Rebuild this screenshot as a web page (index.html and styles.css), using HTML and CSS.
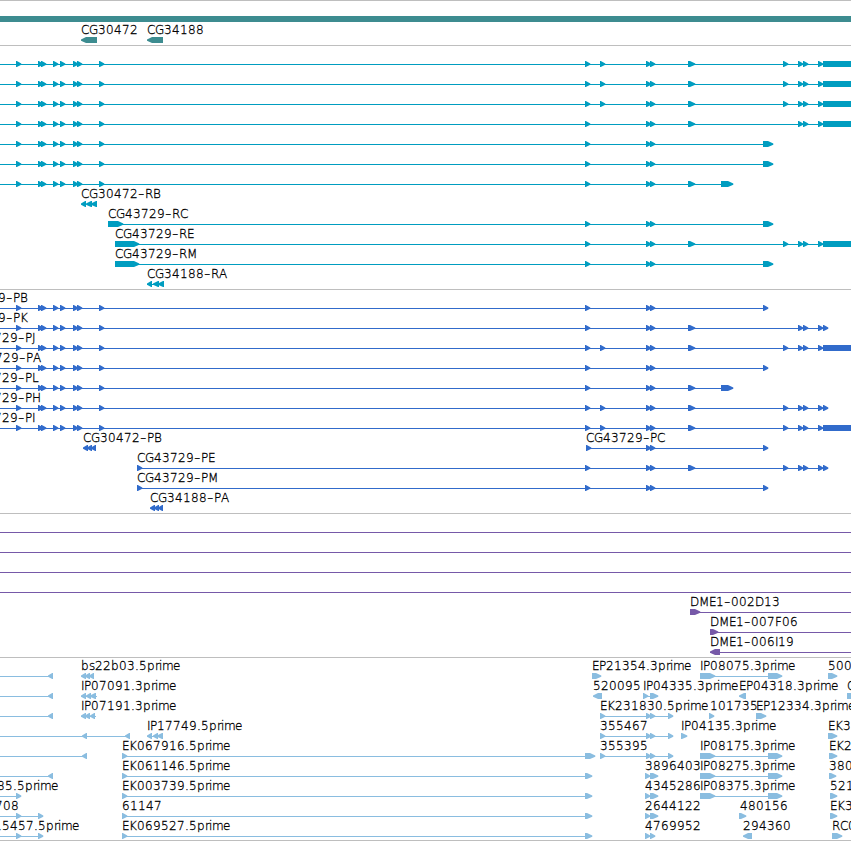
FILE: index.html
```html
<!DOCTYPE html>
<html lang="en"><head><meta charset="utf-8"><title>Genome browser</title><link rel="stylesheet" href="styles.css"></head>
<body><main id="browser" class="browser"></main><script src="tracks.js"></script></body></html>
```

FILE: styles.css
```css
body { margin: 0; background: #fff; }
.browser { width: 851px; height: 841px; overflow: hidden; display: flex; flex-direction: column; }
.track { flex: none; border-top: 1px solid #bebebe; box-sizing: border-box; }
.track.last { border-bottom: 1px solid #bebebe; }
.track svg { display: block; }
.genes { height: 45px; color: #3d8c90; }
.transcripts { height: 244px; color: #009dc0; }
.proteins { height: 224px; color: #316bcb; }
.bacs { height: 144px; color: #7659a8; }
.ests { height: 184px; color: #8abde0; }
.label { font: 200 12px "DejaVu Sans Light", "DejaVu Sans", sans-serif; fill: #000; stroke: #000; stroke-width: 0.3px; font-kerning: none; }
.dash { font-size: 18px; stroke-width: 0.1px; }
.feature { fill: currentColor; }
```

FILE: tracks.js
```js
// Each row: baseline y of the connector, labels, connector spans, and features [start, end].
const adv = {C:8,G:9,E:7,K:8,'.':4,p:8,r:4,i:3,m:11,e:7,b:8,s:6,D:9,M:10,F:7,I:3,L:7,J:4,H:9,A:8,B:8,R:8,P:7,'-':7};

function label(text, x, y) {
  let at = x;
  const xs = [...text].map(c => { const v = at; at += adv[c] || 8; return v; });
  const body = [...text].map((c, i) => c === '-' ? `<tspan class="dash" dy="0.5">-</tspan>` : i && text[i - 1] === '-' ? `<tspan dy="-0.5">${c}</tspan>` : c).join('');
  return `<text class="label" x="${xs.join(' ')}" y="${y}">${body}</text>`;
}
function feature([a, b, dir], y) {
  const t = y - 3, h = y + 3, u = y - 0.5, v = y + 0.7;
  if (dir === '=') return `<path class="feature" d="M${a} ${t}H${b}V${h}H${a}Z"/>`;
  if (dir === '<') {
    const n = Math.max(a + 4.2, Math.min(a + 5, b - 1));
    return `<path class="feature" d="M${b} ${t}H${n}L${a} ${u}V${v}L${n} ${h}H${b}Z"/>`;
  }
  const k = Math.max(a + 0.8, b - 5);
  return `<path class="feature" d="M${a} ${t}H${k}L${b + 0.3} ${u}V${v}L${k} ${h}H${a}Z"/>`;
}
const r = (...xs) => xs.map(x => Array.isArray(x) ? x : [x, x + 5]);
const l = (...xs) => xs.map(x => Array.isArray(x) ? [...x, '<'] : [x, x + 5, '<']);

const W = 851;
const left = r(16, 38, 41, 53, 60, 73, 77, 99);
const mid = r(585, 646, 650);
const wide = r([688, 695]);
const tail = [[823, W, '=']];
const exonsA = [...left, ...mid, ...r(600), ...wide, ...r(783, 798, 803, 818), ...tail];
const short = end => [...left, ...mid, [763, end]];
const trio = [...r(600, 646, 650, 668)];
const pair = [[700, 715], [768, 782]];

const tracks = [
  { cls: 'genes', top: 0, h: 45, rows: [
    { y: 19, f: [[0, W, '=']] },
    { y: 40, labels: [['CG30472', 81], ['CG34188', 147]], f: l([81, 97], [147, 163]) } ] },
  { cls: 'transcripts', top: 45, h: 244, rows: [
    ...[64, 84, 104].map(y => ({ y, lines: [[0, W]], f: exonsA })),
    { y: 124, lines: [[0, W]], f: [...left, ...mid, ...wide, ...r(798, 803, 818), ...tail] },
    ...[144, 164].map(y => ({ y, lines: [[0, 773]], f: short(773) })),
    { y: 184, lines: [[0, 733]], f: [...left, ...mid, ...wide, [721, 733]] },
    { y: 204, labels: [['CG30472-RB', 81]], f: l([81, 86], [86, 92], [91, 97]) },
    { y: 224, labels: [['CG43729-RC', 108]], lines: [[108, 773]], f: [[108, 123], ...mid, [763, 773]] },
    { y: 244, labels: [['CG43729-RE', 115]], lines: [[115, W]], f: [[115, 139], ...mid, ...wide, ...r(783, 798, 803, 818), ...tail] },
    { y: 264, labels: [['CG43729-RM', 115]], lines: [[115, 773]], f: [[115, 139], ...mid, [763, 773]] },
    { y: 284, labels: [['CG34188-RA', 147]], lines: [[147, 164]], f: l(147, [153, 159], [158, 164]) } ] },
  { cls: 'proteins', top: 289, h: 224, rows: [
    { y: 308, labels: [['CG43729-PB', -51]], lines: [[0, 768]], f: short(768) },
    { y: 328, labels: [['CG43729-PK', -51]], lines: [[0, 828]], f: [...left, ...mid, ...wide, ...r(798, 803, 818, 823)] },
    { y: 348, labels: [['CG43729-PJ', -39]], lines: [[0, W]], f: exonsA },
    { y: 368, labels: [['CG43729-PA', -38]], lines: [[0, 768]], f: short(768) },
    { y: 388, labels: [['CG43729-PL', -39]], lines: [[0, 733]], f: [...left, ...mid, ...wide, [721, 733]] },
    { y: 408, labels: [['CG43729-PH', -39]], lines: [[0, 828]], f: [...left, ...mid, ...r(600), ...wide, ...r(783, 798, 803, 818, 823)] },
    { y: 428, labels: [['CG43729-PI', -39]], lines: [[0, W]], f: exonsA },
    { y: 448, labels: [['CG30472-PB', 83], ['CG43729-PC', 586]], lines: [[586, 768]], f: [...l(83, 87, [91, 96]), ...r(586, 646, 650, 763)] },
    { y: 468, labels: [['CG43729-PE', 137]], lines: [[137, 828]], f: [...r(137), ...mid, ...wide, ...r(783, 798, 803, 818, 823)] },
    { y: 488, labels: [['CG43729-PM', 137]], lines: [[137, 768]], f: [...r(137), ...mid, ...r(763)] },
    { y: 508, labels: [['CG34188-PA', 150]], f: l(150, 154, [158, 163]) } ] },
  { cls: 'bacs', top: 513, h: 144, rows: [
    ...[532, 552, 572, 592].map(y => ({ y, lines: [[0, W]], f: [] })),
    { y: 612, labels: [['DME1-002D13', 690]], lines: [[690, W]], f: [[690, 700]] },
    { y: 632, labels: [['DME1-007F06', 710]], lines: [[710, W]], f: [[710, 718]] },
    { y: 652, labels: [['DME1-006I19', 710]], lines: [[710, W]], f: [[710, 720, '<']] } ] },
  { cls: 'ests last', top: 657, h: 184, rows: [
    { y: 676, labels: [['bs22b03.5prime', 81], ['EP21354.3prime', 592], ['IP08075.3prime', 700], ['500', 828]], lines: [[0, 53], [700, 782]], f: [...l(48, 81, 85, 89), [592, 601], ...pair, [828, 837]] },
    { y: 696, labels: [['IP07091.3prime', 81], ['520095', 593], ['IP04335.3prime', 643], ['EP04318.3prime', 739], ['C', 847]], lines: [[0, 53], [81, 97], [643, 658]], f: [...l(48, 81, 86, [90, 96], [593, 602], [739, 746]), [643, 648], [650, 658], [847, W, '=']] },
    { y: 716, labels: [['IP07191.3prime', 81], ['EK231830.5prime', 600], ['101735', 710], ['EP12334.3prime', 756]], lines: [[0, 53], [81, 96], [600, 673]], f: [...l(48, 81, 85, [90, 95]), ...trio, [709, 714], [756, 766]] },
    { y: 736, labels: [['IP17749.5prime', 147], ['355467', 600], ['IP04135.3prime', 681], ['EK3', 828]], lines: [[0, 130], [147, 163], [600, 673]], f: [...l(82, 125, 147, 153, [157, 163]), ...trio, [681, 687], [828, 837]] },
    { y: 756, labels: [['EK067916.5prime', 122], ['355395', 600], ['IP08175.3prime', 700], ['EK2', 829]], lines: [[0, 87], [122, 595], [600, 673], [700, 782]], f: [...l(82), ...r(122), [585, 595], ...trio, ...pair, [829, 837]] },
    ...[[776, 'EK061146.5prime', '3896403', 'IP08275.3prime', '380', 829], [796, 'EK003739.5prime', '4345286', 'IP08375.3prime', '521', 830]].map(([y, a, b, c, d, x]) => ({ y, labels: [[a, 122], [b, 645], [c, 700], [d, x]].concat(y === 796 ? [['85.5prime', -3]] : []), lines: [[0, y === 776 ? 53 : 21], [122, 592], [700, 782]], f: [...(y === 776 ? l(48) : r(16)), ...r(122), [585, 592], [645, 650], [650, 658], ...pair, [x, x + 7]] })),
    { y: 816, labels: [['708', -5], ['61147', 122], ['2644122', 645], ['480156', 740], ['EK3', 830]], lines: [[0, 43], [122, 592]], f: [...r(16, 38, 122), [585, 592], [645, 650], [650, 658], [739, 746], [830, 837]] },
    { y: 836, labels: [['15457.5prime', -6], ['EK069527.5prime', 122], ['4769952', 645], ['294360', 743], ['RC0', 832]], lines: [[0, 43], [122, 592]], f: [...r(16, 38, 122), [585, 592], [645, 650], [650, 655], [743, 752, '<'], [832, 842]] } ] }
];

document.getElementById('browser').innerHTML = tracks.map(t => {
  const off = t.top + 1;
  const rows = t.rows.map(row =>
    (row.lines || []).map(([a, b]) => `<rect class="feature" x="${a}" y="${row.y - off}" width="${b - a}" height="1"/>`).join('') +
    row.f.map(f => feature(f, row.y - off)).join('') +
    (row.labels || []).map(([s, x]) => label(s, x, row.y - off - 6)).join('')).join('');
  return `<section class="track ${t.cls}"><svg width="${W}" height="${t.h - 1}">${rows}</svg></section>`;
}).join('');
```
